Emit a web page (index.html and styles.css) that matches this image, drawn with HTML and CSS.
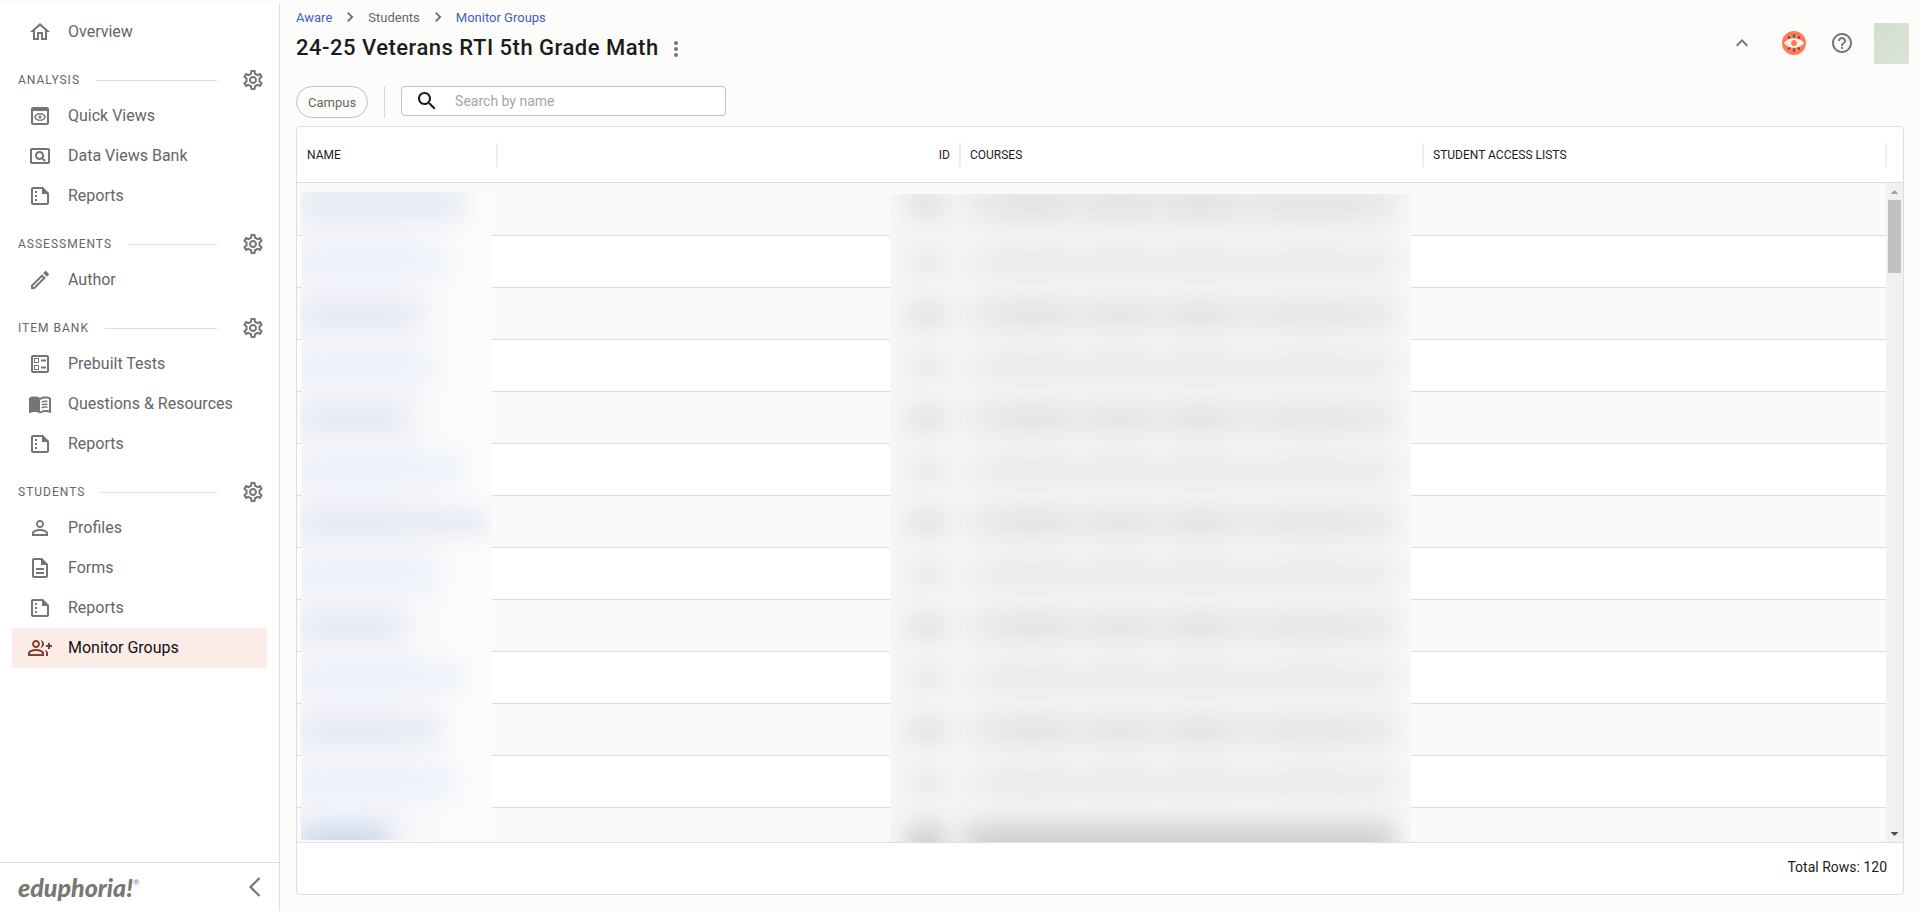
FILE: index.html
```html
<!DOCTYPE html>
<html lang="en">
<head>
<meta charset="utf-8">
<title>24-25 Veterans RTI 5th Grade Math</title>
<link rel="stylesheet" href="styles.css">
</head>
<body>
<svg class="sprite" aria-hidden="true">
  <symbol id="home" viewBox="0 0 24 24"><path d="M12 5.69l5 4.5V18h-2v-6H9v6H7v-7.81l5-4.5M12 3L2 12h3v8h6v-6h2v6h6v-8h3L12 3z"/></symbol>
  <symbol id="preview" viewBox="0 0 24 24"><path d="M19 3H5c-1.11 0-2 .9-2 2v14c0 1.1.89 2 2 2h14c1.1 0 2-.9 2-2V5c0-1.1-.89-2-2-2zm0 16H5V7h14v12z"/><path d="M12 9.700c-2.300 0-4.300 1.300-5.200 3.300.9 2 2.900 3.300 5.200 3.300s4.300-1.300 5.200-3.300c-.9-2-2.900-3.300-5.200-3.300z" fill="none" stroke="currentColor" stroke-width="1.400"/><circle cx="12" cy="13" r="1.500"/></symbol>
  <symbol id="pageview" viewBox="0 0 24 24"><path d="M11.49 16c.88 0 1.7-.26 2.39-.7l2.44 2.44 1.42-1.42-2.44-2.43c.44-.7.7-1.51.7-2.39C16 9.01 13.99 7 11.5 7S7 9.01 7 11.5 9.01 16 11.49 16zm.01-7c1.38 0 2.5 1.12 2.5 2.5S12.88 14 11.5 14 9 12.88 9 11.5 10.12 9 11.5 9zM20 4H4c-1.1 0-2 .9-2 2v12c0 1.1.9 2 2 2h16c1.1 0 2-.9 2-2V6c0-1.1-.9-2-2-2zm0 14H4V6h16v12z"/></symbol>
  <symbol id="report" viewBox="0 0 24 24"><path d="M15 3H5c-1.1 0-1.99.9-1.99 2L3 19c0 1.1.89 2 1.99 2H19c1.1 0 2-.9 2-2V9l-6-6zM5 19V5h9v5h5v9H5zM7 7h2v2H7zm0 4h2v2H7zm0 4h2v2H7z"/></symbol>
  <symbol id="edit" viewBox="0 0 24 24"><path d="M14.06 9.02l.92.92L5.92 19H5v-.92l9.06-9.06M17.66 3c-.25 0-.51.1-.7.29l-1.83 1.83 3.75 3.75 1.83-1.83c.39-.39.39-1.02 0-1.41l-2.34-2.34c-.2-.2-.45-.29-.71-.29zm-3.6 3.19L3 17.25V21h3.75L17.81 9.94l-3.75-3.75z"/></symbol>
  <symbol id="ballot" viewBox="0 0 24 24"><path d="M13 7.5h5v2h-5zm0 7h5v2h-5zM19 3H5c-1.1 0-2 .9-2 2v14c0 1.1.9 2 2 2h14c1.1 0 2-.9 2-2V5c0-1.1-.9-2-2-2zm0 16H5V5h14v14zM11 6H6v5h5V6zm-1 4H7V7h3v3zm1 3H6v5h5v-5zm-1 4H7v-3h3v3z"/></symbol>
  <symbol id="book" viewBox="0 0 24 24"><path d="M21 5c-1.11-.35-2.33-.5-3.5-.5-1.95 0-4.05.4-5.5 1.5-1.45-1.1-3.55-1.5-5.5-1.5S2.45 4.9 1 6v14.65c0 .25.25.5.5.5.1 0 .15-.05.25-.05C3.1 20.45 5.05 20 6.5 20c1.95 0 4.05.4 5.5 1.5 1.35-.85 3.8-1.5 5.5-1.5 1.65 0 3.35.3 4.75 1.05.1.05.15.05.25.05.25 0 .5-.25.5-.5V6c-.6-.45-1.25-.75-2-1zm0 13.5c-1.1-.35-2.3-.5-3.5-.5-1.7 0-4.15.65-5.5 1.5V8c1.35-.85 3.8-1.5 5.5-1.5 1.2 0 2.4.15 3.5.5v11.5z"/><path d="M13.7 10.1c1.8-.8 4-.9 5.8-.5M13.7 12.9c1.8-.8 4-.9 5.8-.5M13.7 15.7c1.8-.8 4-.9 5.8-.5" fill="none" stroke="currentColor" stroke-width="1.5"/></symbol>
  <symbol id="person" viewBox="0 0 24 24"><path d="M12 5.9c1.16 0 2.1.94 2.1 2.1s-.94 2.1-2.1 2.1S9.9 9.16 9.9 8s.94-2.1 2.1-2.1m0 9c2.97 0 6.1 1.46 6.1 2.1v1.1H5.9V17c0-.64 3.13-2.1 6.1-2.1M12 4C9.79 4 8 5.79 8 8s1.79 4 4 4 4-1.79 4-4-1.79-4-4-4zm0 9c-2.67 0-8 1.34-8 4v3h16v-3c0-2.66-5.33-4-8-4z"/></symbol>
  <symbol id="form" viewBox="0 0 24 24"><path d="M8 16h8v2H8zm0-4h8v2H8zm6-10H6c-1.1 0-2 .9-2 2v16c0 1.1.89 2 1.99 2H18c1.1 0 2-.9 2-2V8l-6-6zm4 18H6V4h7v5h5v11z"/></symbol>
  <symbol id="groupadd" viewBox="0 0 24 24"><path d="M22 9V7h-2v2h-2v2h2v2h2v-2h2V9zM8 12c2.21 0 4-1.79 4-4s-1.79-4-4-4-4 1.79-4 4 1.79 4 4 4zm0-6c1.1 0 2 .9 2 2s-.9 2-2 2-2-.9-2-2 .9-2 2-2zM8 13c-2.67 0-8 1.34-8 4v3h16v-3c0-2.66-5.33-4-8-4zm6 5H2v-.99C2.2 16.29 5.3 15 8 15s5.8 1.29 6 2v1zM12.51 4.05C13.43 5.11 14 6.49 14 8s-.57 2.89-1.49 3.95C14.47 11.7 16 10.04 16 8s-1.53-3.7-3.49-3.95zM16.53 13.83C17.42 14.66 18 15.7 18 17v3h2v-3c0-1.45-1.59-2.51-3.47-3.17z"/></symbol>
  <symbol id="gear" viewBox="0 0 24 24"><path d="M19.43 12.98c.04-.32.07-.64.07-.98 0-.34-.03-.66-.07-.98l2.11-1.65c.19-.15.24-.42.12-.64l-2-3.46c-.09-.16-.26-.25-.44-.25-.06 0-.12.01-.17.03l-2.49 1c-.52-.4-1.08-.73-1.69-.98l-.38-2.65C14.46 2.18 14.25 2 14 2h-4c-.25 0-.46.18-.49.42l-.38 2.65c-.61.25-1.17.59-1.69.98l-2.49-1c-.06-.02-.12-.03-.18-.03-.17 0-.34.09-.43.25l-2 3.46c-.13.22-.07.49.12.64l2.11 1.65c-.04.32-.07.65-.07.98 0 .33.03.66.07.98l-2.11 1.65c-.19.15-.24.42-.12.64l2 3.46c.09.16.26.25.44.25.06 0 .12-.01.17-.03l2.49-1c.52.4 1.08.73 1.69.98l.38 2.65c.03.24.24.42.49.42h4c.25 0 .46-.18.49-.42l.38-2.65c.61-.25 1.17-.59 1.69-.98l2.49 1c.06.02.12.03.18.03.17 0 .34-.09.43-.25l2-3.46c.12-.22.07-.49-.12-.64l-2.11-1.65zm-1.98-1.71c.04.31.05.52.05.73 0 .21-.02.43-.05.73l-.14 1.13.89.7 1.08.84-.7 1.21-1.27-.51-1.04-.42-.9.68c-.43.32-.84.56-1.25.73l-1.06.43-.16 1.13-.2 1.35h-1.4l-.19-1.35-.16-1.13-1.06-.43c-.43-.18-.83-.41-1.23-.71l-.91-.7-1.06.43-1.27.51-.7-1.21 1.08-.84.89-.7-.14-1.13c-.03-.31-.05-.54-.05-.74s.02-.43.05-.73l.14-1.13-.89-.7-1.08-.84.7-1.21 1.27.51 1.04.42.9-.68c.43-.32.84-.56 1.25-.73l1.06-.43.16-1.13.2-1.35h1.39l.19 1.35.16 1.13 1.06.43c.43.18.83.41 1.23.71l.91.7 1.06-.43 1.27-.51.7 1.21-1.07.85-.89.7.14 1.13zM12 8c-2.21 0-4 1.79-4 4s1.79 4 4 4 4-1.79 4-4-1.79-4-4-4zm0 6c-1.1 0-2-.9-2-2s.9-2 2-2 2 .9 2 2-.9 2-2 2z"/></symbol>
  <symbol id="chevron" viewBox="0 0 24 24"><path d="M10 6L8.59 7.41 13.17 12l-4.58 4.59L10 18l6-6z"/></symbol>
  <symbol id="dots" viewBox="0 0 24 24"><path d="M12 8c1.1 0 2-.9 2-2s-.9-2-2-2-2 .9-2 2 .9 2 2 2zm0 2c-1.1 0-2 .9-2 2s.9 2 2 2 2-.9 2-2-.9-2-2-2zm0 6c-1.1 0-2 .9-2 2s.9 2 2 2 2-.9 2-2-.9-2-2-2z"/></symbol>
  <symbol id="search" viewBox="0 0 24 24"><path d="M15.5 14h-.79l-.28-.27C15.41 12.59 16 11.11 16 9.5 16 5.91 13.09 3 9.5 3S3 5.91 3 9.5 5.91 16 9.5 16c1.61 0 3.09-.59 4.23-1.57l.27.28v.79l5 4.99L20.49 19l-4.99-5zm-6 0C7.01 14 5 11.99 5 9.5S7.01 5 9.5 5 14 7.01 14 9.5 11.99 14 9.5 14z"/></symbol>
  <symbol id="up" viewBox="0 0 24 24"><path d="M12 8l-6 6 1.41 1.41L12 10.83l4.59 4.58L18 14z"/></symbol>
  <symbol id="help" viewBox="0 0 24 24"><path d="M11 18h2v-2h-2v2zm1-16C6.48 2 2 6.48 2 12s4.48 10 10 10 10-4.48 10-10S17.52 2 12 2zm0 18c-4.41 0-8-3.59-8-8s3.59-8 8-8 8 3.59 8 8-3.59 8-8 8zm0-14c-2.21 0-4 1.79-4 4h2c0-1.1.9-2 2-2s2 .9 2 2c0 2-3 1.75-3 5h2c0-2.25 3-2.5 3-5 0-2.21-1.79-4-4-4z"/></symbol>
  <symbol id="eye" viewBox="0 0 24 24">
    <circle cx="12" cy="12" r="12" fill="#ff7a50"/>
    <path d="M12 3.2v3.4M12 17.4v3.4M6.3 5.6l1.5 2.2M17.7 5.6l-1.5 2.2M6.3 18.4l1.5-2.2M17.7 18.4l-1.5-2.2" stroke="#5b3f63" stroke-width="1.7" fill="none"/>
    <path d="M1.8 12C4.5 8.8 8 7.2 12 7.2s7.5 1.6 10.2 4.8C19.5 15.2 16 16.8 12 16.8S4.5 15.2 1.8 12z" fill="#fff3f4"/>
    <circle cx="12" cy="12" r="2.9" fill="#ff7a50"/>
  </symbol>
  <symbol id="collapse" viewBox="0 0 24 24"><path d="M16.5 3L7.5 12l9 9" fill="none" stroke="currentColor" stroke-width="2.2"/></symbol>
</svg>

<div class="app">
  <aside class="sidebar">
    <nav class="nav">
      <a class="item" href="#"><svg class="icon"><use href="#home"/></svg><span class="item-text">Overview</span></a>

      <div class="section"><h2 class="label">ANALYSIS</h2><span class="rule"></span><button class="icon-button" aria-label="Analysis settings"><svg class="icon"><use href="#gear"/></svg></button></div>
      <a class="item" href="#"><svg class="icon"><use href="#preview"/></svg><span class="item-text">Quick Views</span></a>
      <a class="item" href="#"><svg class="icon"><use href="#pageview"/></svg><span class="item-text">Data Views Bank</span></a>
      <a class="item" href="#"><svg class="icon"><use href="#report"/></svg><span class="item-text">Reports</span></a>

      <div class="section"><h2 class="label">ASSESSMENTS</h2><span class="rule"></span><button class="icon-button" aria-label="Assessments settings"><svg class="icon"><use href="#gear"/></svg></button></div>
      <a class="item" href="#"><svg class="icon"><use href="#edit"/></svg><span class="item-text">Author</span></a>

      <div class="section"><h2 class="label">ITEM BANK</h2><span class="rule"></span><button class="icon-button" aria-label="Item bank settings"><svg class="icon"><use href="#gear"/></svg></button></div>
      <a class="item" href="#"><svg class="icon"><use href="#ballot"/></svg><span class="item-text">Prebuilt Tests</span></a>
      <a class="item" href="#"><svg class="icon"><use href="#book"/></svg><span class="item-text">Questions &amp; Resources</span></a>
      <a class="item" href="#"><svg class="icon"><use href="#report"/></svg><span class="item-text">Reports</span></a>

      <div class="section"><h2 class="label">STUDENTS</h2><span class="rule"></span><button class="icon-button" aria-label="Students settings"><svg class="icon"><use href="#gear"/></svg></button></div>
      <a class="item" href="#"><svg class="icon"><use href="#person"/></svg><span class="item-text">Profiles</span></a>
      <a class="item" href="#"><svg class="icon"><use href="#form"/></svg><span class="item-text">Forms</span></a>
      <a class="item" href="#"><svg class="icon"><use href="#report"/></svg><span class="item-text">Reports</span></a>
      <a class="item active" href="#" aria-current="page"><svg class="icon"><use href="#groupadd"/></svg><span class="item-text">Monitor Groups</span></a>
    </nav>
    <div class="sidebar-footer">
      <span class="logo">eduphoria!<sup class="mark">®</sup></span>
      <button class="icon-button" aria-label="Collapse menu"><svg class="icon"><use href="#collapse"/></svg></button>
    </div>
  </aside>

  <main class="main">
    <header class="header">
      <div class="heading">
        <nav class="crumbs" aria-label="Breadcrumb">
          <a class="crumb" href="#">Aware</a>
          <svg class="crumb-icon"><use href="#chevron"/></svg>
          <span>Students</span>
          <svg class="crumb-icon"><use href="#chevron"/></svg>
          <a class="crumb" href="#">Monitor Groups</a>
        </nav>
        <div class="title-row">
          <h1 class="title">24-25 Veterans RTI 5th Grade Math</h1>
          <button class="icon-button" aria-label="More actions"><svg class="icon"><use href="#dots"/></svg></button>
        </div>
      </div>
      <div class="tools">
        <button class="icon-button" aria-label="Collapse header"><svg class="icon"><use href="#up"/></svg></button>
        <button class="icon-button" aria-label="Aware"><svg class="icon"><use href="#eye"/></svg></button>
        <button class="icon-button" aria-label="Help"><svg class="icon"><use href="#help"/></svg></button>
        <span class="avatar"></span>
      </div>
    </header>

    <div class="filters">
      <button class="chip">Campus</button>
      <span class="divider"></span>
      <label class="search">
        <svg class="icon"><use href="#search"/></svg>
        <input class="search-input" type="text" placeholder="Search by name" aria-label="Search by name">
      </label>
    </div>

    <section class="card">
      <div class="grid">
        <table class="table">
          <colgroup><col class="col-name"><col><col><col><col class="col-end"></colgroup>
          <thead>
            <tr>
              <th scope="col"><div class="head">NAME</div></th>
              <th scope="col"><div class="head right">ID</div></th>
              <th scope="col"><div class="head">COURSES</div></th>
              <th scope="col"><div class="head">STUDENT ACCESS LISTS</div></th>
              <td></td>
            </tr>
          </thead>
          <tbody>
            <tr><td></td><td></td><td></td><td></td><td></td></tr>
            <tr><td></td><td></td><td></td><td></td><td></td></tr>
            <tr><td></td><td></td><td></td><td></td><td></td></tr>
            <tr><td></td><td></td><td></td><td></td><td></td></tr>
            <tr><td></td><td></td><td></td><td></td><td></td></tr>
            <tr><td></td><td></td><td></td><td></td><td></td></tr>
            <tr><td></td><td></td><td></td><td></td><td></td></tr>
            <tr><td></td><td></td><td></td><td></td><td></td></tr>
            <tr><td></td><td></td><td></td><td></td><td></td></tr>
            <tr><td></td><td></td><td></td><td></td><td></td></tr>
            <tr><td></td><td></td><td></td><td></td><td></td></tr>
            <tr><td></td><td></td><td></td><td></td><td></td></tr>
            <tr><td></td><td></td><td></td><td></td><td></td></tr>
          </tbody>
        </table>

        <div class="veil veil-names" aria-hidden="true">
          <i class="smear" style="width:164px"></i><i class="smear" style="width:146px"></i><i class="smear" style="width:121px"></i><i class="smear" style="width:128px"></i><i class="smear" style="width:107px"></i><i class="smear" style="width:162px"></i><i class="smear" style="width:189px"></i><i class="smear" style="width:136px"></i><i class="smear" style="width:101px"></i><i class="smear" style="width:162px"></i><i class="smear" style="width:140px"></i><i class="smear" style="width:154px"></i><i class="smear" style="width:88px"></i>
        </div>
        <div class="veil veil-courses" aria-hidden="true">
          <div class="pair"><i class="smear"></i><i class="smear"></i></div>
          <div class="pair"><i class="smear"></i><i class="smear"></i></div>
          <div class="pair"><i class="smear"></i><i class="smear"></i></div>
          <div class="pair"><i class="smear"></i><i class="smear"></i></div>
          <div class="pair"><i class="smear"></i><i class="smear"></i></div>
          <div class="pair"><i class="smear"></i><i class="smear"></i></div>
          <div class="pair"><i class="smear"></i><i class="smear"></i></div>
          <div class="pair"><i class="smear"></i><i class="smear"></i></div>
          <div class="pair"><i class="smear"></i><i class="smear"></i></div>
          <div class="pair"><i class="smear"></i><i class="smear"></i></div>
          <div class="pair"><i class="smear"></i><i class="smear"></i></div>
          <div class="pair"><i class="smear"></i><i class="smear"></i></div>
          <div class="pair"><i class="smear"></i><i class="smear"></i></div>
        </div>

        <div class="scrollbar" aria-hidden="true">
          <span class="arrow arrow-up"></span>
          <span class="thumb"></span>
          <span class="arrow arrow-down"></span>
        </div>
      </div>
      <footer class="total">Total Rows: 120</footer>
    </section>
  </main>
</div>
</body>
</html>
```
FILE: styles.css
```css
* { box-sizing: border-box; }

body {
  margin: 0;
  background: #fcfcfa;
  color: #1c1c1c;
  font-family: Roboto, "Liberation Sans", sans-serif;
  font-size: 14px;
}

.sprite { display: none; }

.icon {
  display: block;
  flex: none;
  width: 24px;
  height: 24px;
  fill: currentColor;
}

.icon-button {
  padding: 0;
  border: 0;
  background: none;
  color: #757573;
}

.app {
  display: flex;
  height: 100vh;
}

/* Sidebar */

.sidebar {
  display: flex;
  flex: none;
  flex-direction: column;
  width: 280px;
  margin-top: 4px;
  border-right: 1px solid #dededd;
  background: #fff;
  color: #666664;
}

.nav {
  flex: 1;
  min-height: 0;
  padding: 8px 12px 0;
}

.item {
  display: flex;
  align-items: center;
  gap: 16px;
  height: 40px;
  padding: 0 16px;
  color: inherit;
  font-size: 16px;
  text-decoration: none;
}

.item .icon { color: #757573; }

.item-text { padding-bottom: 2px; }

.item.active {
  background: #fcece8;
  color: #111;
}

.item.active .icon { color: #83402c; }

.section {
  display: flex;
  align-items: center;
  height: 32px;
  margin-top: 12px;
  padding: 0 2px 0 6px;
}

.label {
  margin: 0;
  font-size: 12px;
  font-weight: 400;
  letter-spacing: 1px;
}

.rule {
  flex: 1;
  height: 1px;
  margin: 0 24px 0 16px;
  background: #dededd;
}

.sidebar-footer {
  display: flex;
  align-items: center;
  justify-content: space-between;
  height: 49px;
  padding: 0 12px 0 18px;
  border-top: 1px solid #dededd;
}

.logo {
  color: #777774;
  font-family: Lato, sans-serif;
  font-size: 25px;
  font-style: italic;
  font-weight: 900;
  line-height: 32px;
}

.mark {
  font-size: 8px;
  font-weight: 400;
  line-height: 8px;
  vertical-align: 12px;
}

/* Page header */

.main {
  display: flex;
  flex: 1;
  flex-direction: column;
  min-width: 0;
  padding: 7px 16px 16px;
}

.header {
  display: flex;
  justify-content: space-between;
}

.crumbs {
  display: flex;
  align-items: center;
  gap: 8px;
  height: 20px;
  color: #666664;
  font-size: 13px;
}

.crumb {
  color: #3f5fc4;
  text-decoration: none;
}

.crumb-icon {
  width: 20px;
  height: 20px;
  fill: #666664;
}

.title-row {
  display: flex;
  align-items: center;
  gap: 5px;
  height: 40px;
}

.title-row .icon-button { padding-top: 4px; }

.title {
  margin: 0;
  font-size: 22px;
  font-weight: 500;
  letter-spacing: 0.5px;
}

.tools {
  display: flex;
  align-items: center;
  gap: 24px;
  height: 72px;
  margin-right: -5px;
}

.tools .icon-button:first-child { margin-right: 4px; }

.avatar {
  width: 35px;
  height: 41px;
  margin-left: -4px;
  background: linear-gradient(135deg, #d3decf, #d9e4d6);
}

/* Filters */

.filters {
  display: flex;
  align-items: flex-start;
  gap: 16px;
  margin: 7px 0 8px;
}

.chip {
  height: 32px;
  padding: 1px 11px 0;
  border: 1px solid #c4c4ba;
  border-radius: 16px;
  background: none;
  color: #666664;
  font: inherit;
  font-size: 13px;
}

.divider {
  width: 1px;
  height: 32px;
  background: #d9d9d7;
}

.search {
  display: flex;
  align-items: center;
  gap: 16px;
  width: 325px;
  height: 30px;
  padding: 0 13px;
  border: 1px solid #c2c2c0;
  border-radius: 4px;
  background: #fff;
}

.search-input {
  flex: 1;
  min-width: 0;
  padding: 0;
  border: 0;
  outline: 0;
  background: none;
  color: inherit;
  font: inherit;
}

.search-input::placeholder { color: #a6a6a6; }

/* Student table */

.card {
  display: flex;
  flex: 1;
  flex-direction: column;
  min-height: 0;
  border: 1px solid #dededd;
  border-radius: 4px;
  background: #fff;
  overflow: hidden;
}

.grid {
  position: relative;
  flex: 1;
  min-height: 0;
  overflow: hidden;
}

.table {
  width: 100%;
  border-collapse: separate;
  border-spacing: 0;
  table-layout: fixed;
}

.col-name { width: 201px; }
.col-end { width: 16px; }

.table th,
.table td {
  height: 52px;
  padding: 0;
  border-bottom: 1px solid #dededd;
  font-size: 12px;
  font-weight: 400;
  text-align: left;
}

.table thead th,
.table thead td { height: 56px; }

.table tbody tr:nth-child(odd) { background: #fafafa; }
.table tbody tr:first-child td { height: 53px; }

.head {
  height: 24px;
  padding: 0 9px;
  border-right: 2px solid #ededed;
  line-height: 24px;
}

.table th:first-child .head { padding-left: 10px; }

.head.right { text-align: right; }

.veil {
  position: absolute;
  display: flex;
  flex-direction: column;
  gap: 32px;
  overflow: hidden;
}

.veil-names {
  top: 65px;
  bottom: 2px;
  left: 4px;
  width: 191px;
  padding-top: 8px;
  background: linear-gradient(90deg, #f5f6fa 45%, #fafbfb 80%, #fcfcfc);
}

.veil-courses {
  top: 67px;
  bottom: 0;
  left: calc(37% - 1px);
  width: calc(32% + 7px);
  padding: 6px 16px 0;
  background: linear-gradient(90deg, #f7f7f7, #f4f4f4 20%, #f4f4f4 94%, #f8f8f8);
}

.smear {
  flex: none;
  height: 20px;
  background: #e0e5f1;
  filter: blur(12px);
}

.smear:nth-child(even) { background: #e9eefa; }
.veil-names .smear:first-child { height: 32px; margin-top: -12px; background: #e6eaf4; }
.veil-names .smear:last-child { height: 40px; background: #d0d9ec; }

.pair {
  display: flex;
  flex: none;
  gap: 20px;
  height: 20px;
}

.pair .smear {
  width: 40px;
  height: 100%;
  background: #dcdcdc;
}

.pair .smear:last-child {
  flex: 1;
  width: auto;
  background: linear-gradient(90deg, #e8e8e8, #dadada 16%, #e4e4e4 26%, #dcdcdc 36%, #e4e4e4 46%, #dadada 54%, #e4e4e4 64%, #dedede 80%, #e4e4e4);
}

.pair:nth-child(even) { opacity: 0.6; }
.pair:first-child { height: 32px; margin-top: -12px; opacity: 0.8; }
.pair:last-child { height: 40px; }
.pair:last-child .smear { background: #d0d0d0; }

.scrollbar {
  position: absolute;
  top: 56px;
  right: 0;
  bottom: 0;
  display: flex;
  flex-direction: column;
  align-items: center;
  width: 17px;
  background: #f1f1f1;
}

.arrow {
  width: 8px;
  height: 4px;
  margin: 7px 0 6px;
}

.arrow-up {
  background: #a3a3a3;
  clip-path: polygon(50% 0, 100% 100%, 0 100%);
}

.arrow-down {
  margin-top: auto;
  background: #505050;
  clip-path: polygon(0 0, 100% 0, 50% 100%);
}

.thumb {
  width: 13px;
  height: 73px;
  background: #c1c1c1;
}

.total {
  height: 52px;
  padding: 0 16px;
  border-top: 1px solid #dededd;
  line-height: 48px;
  text-align: right;
}
```
